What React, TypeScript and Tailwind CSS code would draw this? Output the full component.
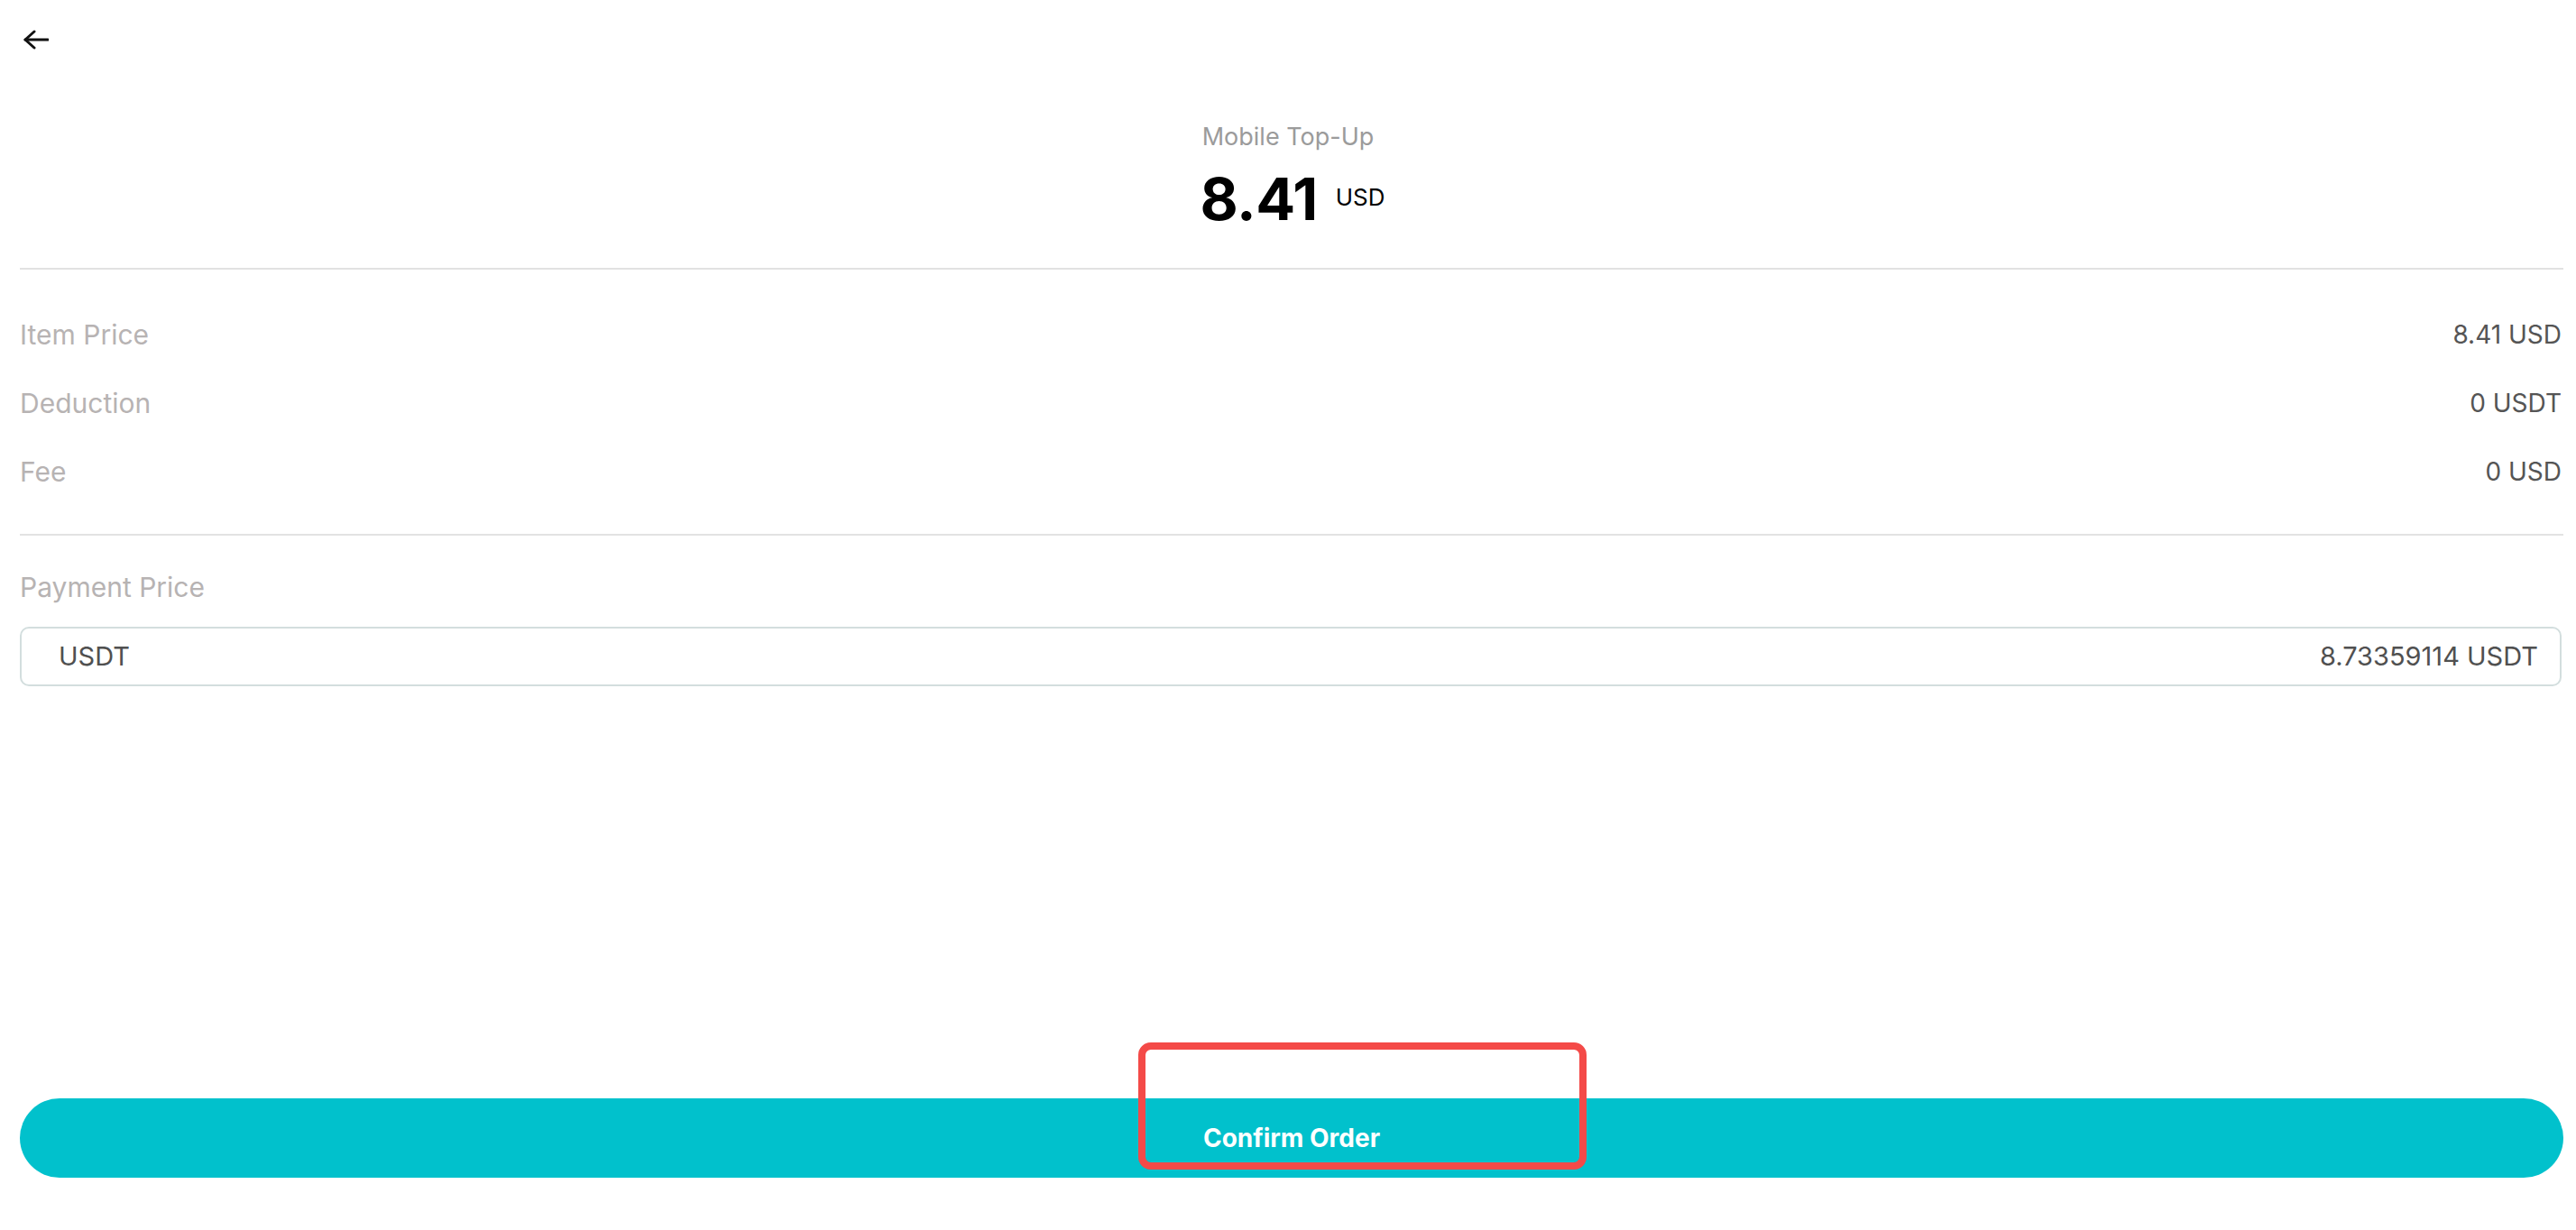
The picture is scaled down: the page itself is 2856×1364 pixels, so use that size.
import React from 'react';

// ====== Data ======
const rows = [
  { label: 'Item Price', value: '8.41 USD' },
  { label: 'Deduction', value: '0 USDT' },
  { label: 'Fee', value: '0 USD' },
];

function BackArrow() {
  return (
    <svg width="28" height="22" viewBox="0 0 28 22" fill="none" stroke="#111" strokeWidth="3" strokeLinecap="round" strokeLinejoin="round">
      <path d="M12 2 L2 11 L12 20" />
      <path d="M2 11 H27" />
    </svg>
  );
}

// ====== Main Export ======
export default function App() {
  return (
    <div className="relative w-full h-[1364px] bg-white flex flex-col overflow-hidden" style={{ fontFamily: 'Inter, "Noto Sans", sans-serif' }}>
      {/* Top bar */}
      <div className="h-[88px] flex items-center pl-[26px]">
        <BackArrow />
      </div>

      {/* Amount header */}
      <div className="mt-[48px] flex flex-col items-center">
        <p className="text-[27px] leading-[32px] text-[#9b9b9b]">Mobile Top-Up</p>
        <div className="mt-[21px] flex items-center gap-[20px] pl-[10px]">
          <span className="text-[65px] leading-[64px] font-bold text-black tracking-[-0.5px]">8.41</span>
          <span className="text-[26px] leading-[30px] text-black mb-[4px]">USD</span>
        </div>
      </div>

      <div className="pl-[22px] pr-[14px] flex flex-col flex-1">
        <div className="mt-[44px] h-[2px] bg-[#e2e2e2]" />

        {/* Price breakdown */}
        <div className="mt-[52px] flex flex-col gap-[36px]">
          {rows.map((r) => (
            <div key={r.label} className="flex items-center justify-between pr-[2px] h-[40px]">
              <span className="text-[30px] leading-[40px] text-[#b7b3b3]">{r.label}</span>
              <span className="text-[28px] leading-[40px] text-[#555555]">{r.value}</span>
            </div>
          ))}
        </div>

        <div className="mt-[49px] h-[2px] bg-[#e2e2e2]" />

        {/* Payment */}
        <p className="mt-[37px] text-[30px] leading-[40px] text-[#b7b3b3]">Payment Price</p>
        <div className="mt-[24px] h-[66px] mr-[2px] rounded-[10px] border-2 border-[#d3dede] flex items-center justify-between pl-[41px] pr-[24px]">
          <span className="text-[29px] text-[#505050]">USDT</span>
          <span className="text-[29px] text-[#505050]">8.73359114 USDT</span>
        </div>

        <div className="flex-1" />

        <button className="mb-[58px] h-[88px] w-full rounded-full bg-[#01c1cc] text-white text-[28px] font-bold flex items-center justify-center">
          Confirm Order
        </button>
      </div>

      {/* Annotation highlight */}
      <div className="absolute left-[1262px] top-[1156px] w-[497px] h-[141px] border-[8px] border-[#f44a48] rounded-[14px] pointer-events-none" />
    </div>
  );
}
